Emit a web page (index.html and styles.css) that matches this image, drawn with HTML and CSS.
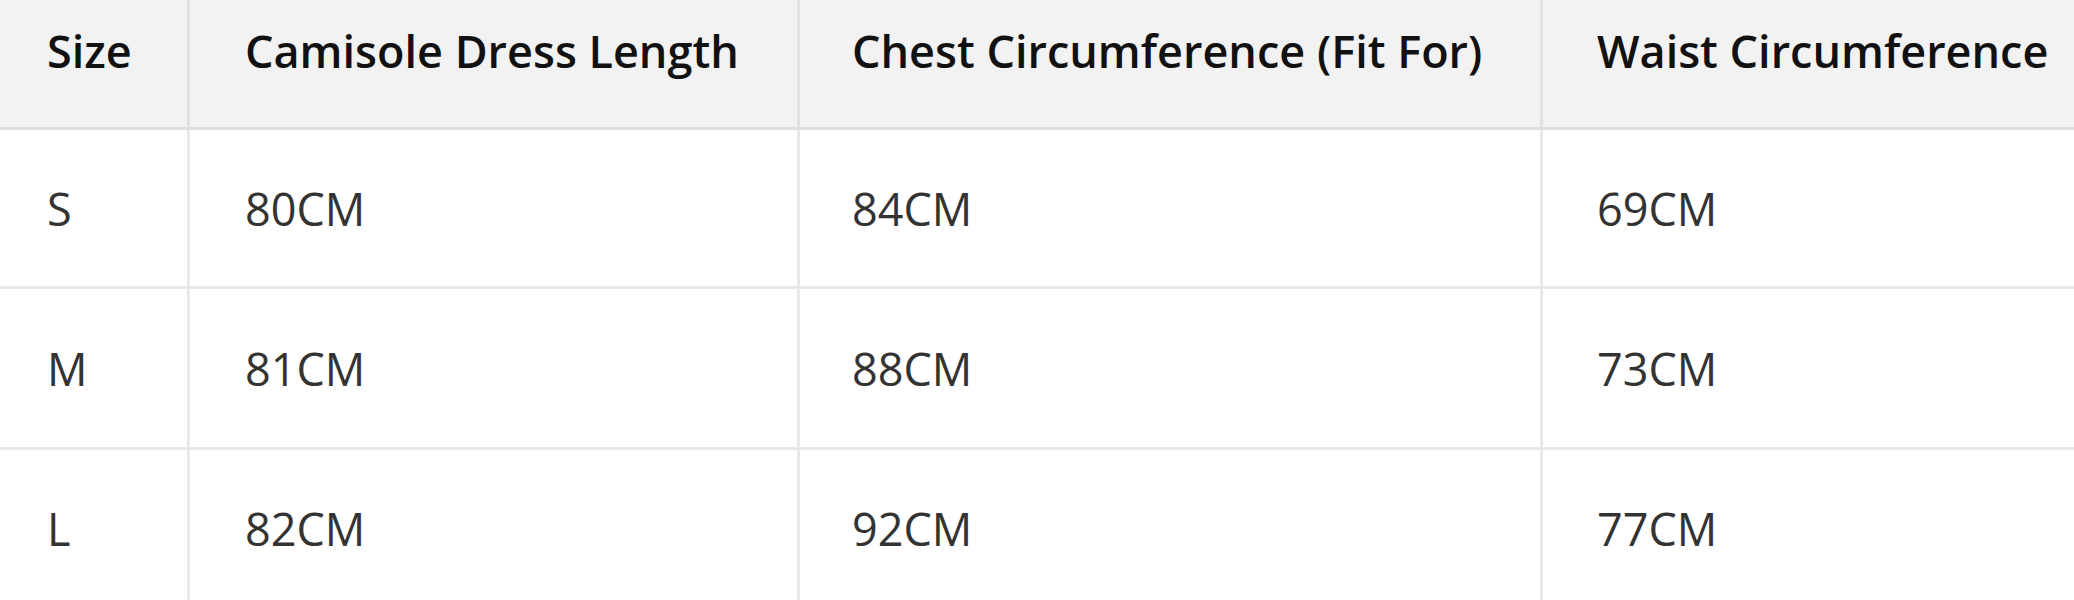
FILE: index.html
```html
<!DOCTYPE html>
<html>
<head>
<meta charset="utf-8">
<link rel="stylesheet" href="styles.css">
</head>
<body>
<div class="size-table">
  <div class="cell head c1">Size</div>
  <div class="cell head c2">Camisole Dress Length</div>
  <div class="cell head c3">Chest Circumference (Fit For)</div>
  <div class="cell head c4">Waist Circumference</div>

  <div class="cell r1 c1">S</div>
  <div class="cell r1 c2">80CM</div>
  <div class="cell r1 c3">84CM</div>
  <div class="cell r1 c4">69CM</div>

  <div class="cell r2 c1">M</div>
  <div class="cell r2 c2">81CM</div>
  <div class="cell r2 c3">88CM</div>
  <div class="cell r2 c4">73CM</div>

  <div class="cell r3 c1">L</div>
  <div class="cell r3 c2">82CM</div>
  <div class="cell r3 c3">92CM</div>
  <div class="cell r3 c4">77CM</div>
</div>
</body>
</html>
```
FILE: styles.css
```css
html, body {
  margin: 0;
  padding: 0;
  background: #ffffff;
  overflow: hidden;
}
body {
  font-family: "Open Sans", "Noto Sans", sans-serif;
  color: #333333;
  width: 2074px;
  height: 600px;
}
.size-table {
  display: grid;
  grid-template-columns: 190px 610px 743px 1fr;
  grid-template-rows: 130px 159px 161px 160px;
}
.cell {
  box-sizing: border-box;
  border-right: 3px solid #e9e9e9;
  border-bottom: 3px solid #e9e9e9;
  padding-left: 50px;
  display: flex;
  align-items: center;
  font-size: 45px;
  line-height: 1;
  white-space: nowrap;
}
.cell.c1 { padding-left: 47px; }
.cell.c2 { padding-left: 55px; }
.cell.c3 { padding-left: 52px; }
.cell.c4 { padding-left: 54px; border-right: none; }
.head {
  background: #f2f2f2;
  color: #111111;
  font-weight: 600;
  border-bottom-color: #dfdfdf;
  border-right-color: #e2e2e2;
  align-items: flex-start;
  padding-top: 28px;
}
```
